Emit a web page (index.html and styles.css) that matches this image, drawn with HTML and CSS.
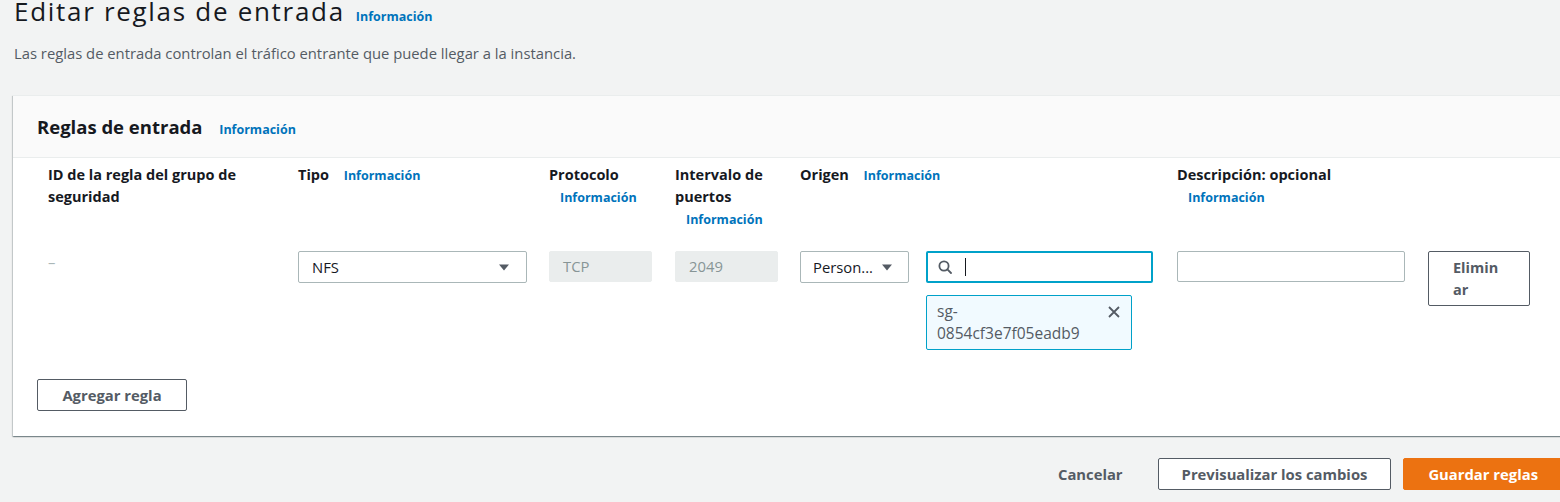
FILE: index.html
```html
<!DOCTYPE html>
<html lang="es">
<head>
<meta charset="utf-8">
<title>Editar reglas de entrada</title>
<link rel="stylesheet" href="styles.css">
</head>
<body>
<div class="page">
  <header class="page-head">
    <h1 class="title"><span class="title-text">Editar reglas de entrada</span><a class="info info-title" href="#">Información</a></h1>
    <p class="lead">Las reglas de entrada controlan el tráfico entrante que puede llegar a la instancia.</p>
  </header>

  <section class="panel">
    <div class="panel-head">
      <h2 class="panel-title">Reglas de entrada <a class="info" href="#">Información</a></h2>
    </div>
    <div class="panel-body">
      <div class="rules">
        <div class="th">ID de la regla del grupo de seguridad</div>
        <div class="th">Tipo <a class="info" href="#">Información</a></div>
        <div class="th">Protocolo <a class="info" href="#">Información</a></div>
        <div class="th">Intervalo de puertos <a class="info" href="#">Información</a></div>
        <div class="th">Origen <a class="info" href="#">Información</a></div>
        <div class="th">Descripción: opcional <a class="info" href="#">Información</a></div>
        <div class="th"></div>

        <div class="td td-id">–</div>
        <div class="td">
          <div class="select select-type"><span>NFS</span>
            <svg class="caret" viewBox="0 0 10 7" width="10" height="7"><path d="M0 0.5H10L5 6.5Z"/></svg>
          </div>
        </div>
        <div class="td"><div class="field field-disabled">TCP</div></div>
        <div class="td"><div class="field field-disabled">2049</div></div>
        <div class="td">
          <div class="origin">
            <div class="select select-origin"><span>Person...</span>
              <svg class="caret" viewBox="0 0 10 7" width="10" height="7"><path d="M0 0.5H10L5 6.5Z"/></svg>
            </div>
            <div class="origin-search">
              <div class="search">
                <svg class="search-icon" viewBox="0 0 14 14" width="14" height="14"><circle cx="6" cy="6" r="4.6"/><path d="M9.4 9.4L13 13"/></svg>
                <span class="cursor"></span>
              </div>
              <div class="token">
                <span class="token-text">sg-<wbr>0854cf3e7f05eadb9</span>
                <svg class="token-x" viewBox="0 0 12 12" width="12" height="12"><path d="M1 1L11 11M11 1L1 11"/></svg>
              </div>
            </div>
          </div>
        </div>
        <div class="td"><div class="field field-text"></div></div>
        <div class="td"><button class="btn btn-remove" type="button">Eliminar</button></div>
      </div>
      <button class="btn btn-add" type="button">Agregar regla</button>
    </div>
  </section>

  <footer class="actions">
    <button class="btn btn-link" type="button">Cancelar</button>
    <button class="btn" type="button">Previsualizar los cambios</button>
    <button class="btn btn-primary" type="button">Guardar reglas</button>
  </footer>
</div>
</body>
</html>
```
FILE: styles.css
```css
* { box-sizing: border-box; }

body {
  margin: 0;
  background: #f2f3f3;
  font-family: "Open Sans", "Noto Sans", sans-serif;
  font-size: 14.8px;
  line-height: 22px;
  color: #16191f;
  overflow: hidden;
}

.page {
  width: 1562px;
  padding-left: 13px;
}

.page-head { padding-left: 1px; }

.title {
  display: flex;
  align-items: baseline;
  height: 22px;
  margin: 0;
  font-weight: 400;
  color: #16191f;
}

.title-text {
  font-size: 26px;
  line-height: 22px;
  letter-spacing: 1.7px;
}

.info {
  display: inline-block;
  margin-left: 11px;
  font-size: 12.5px;
  font-weight: 700;
  line-height: 16px;
  letter-spacing: 0;
  color: #0073bb;
  text-decoration: none;
}

.info-title { margin-left: 11px; }

.lead {
  margin: 20px 0 0;
  color: #545b64;
}

.panel {
  margin-top: 31px;
  background: #fff;
  border-top: 1px solid #eaeded;
  box-shadow: 0 1px 1px 0 rgba(0, 28, 36, 0.3), 1px 1px 1px 0 rgba(0, 28, 36, 0.15), -1px 1px 1px 0 rgba(0, 28, 36, 0.15);
}

.panel-head {
  background: #fafafa;
  padding: 20px 24px 19px;
  border-bottom: 1px solid #eaeded;
}

.panel-title {
  margin: 0;
  font-size: 18.5px;
  font-weight: 700;
  line-height: 22px;
  height: 22px;
}

.panel-title .info { margin-left: 12px; }

.panel-body {
  padding: 6px 24px 25px;
}

.rules {
  display: grid;
  grid-template-columns: 250px 251px 126px 125px 377px 251px 110px;
  row-gap: 21px;
  margin-left: 11px;
  align-items: start;
}

.th {
  padding-right: 22px;
  font-size: 14.5px;
  font-weight: 700;
  line-height: 22px;
  color: #16191f;
}

.td-id {
  color: #aab7b8;
  line-height: 22px;
}

.select {
  display: flex;
  align-items: center;
  justify-content: space-between;
  height: 32px;
  padding: 0 17px 0 13px;
  background: #fff;
  border: 1px solid #aab7b8;
  border-radius: 2px;
  color: #16191f;
}

.select-type { width: 229px; }
.select-origin { width: 109px; padding-left: 12px; padding-right: 16px; }

.caret { fill: #545b64; flex: none; }

.field {
  height: 31px;
  border-radius: 2px;
  padding-left: 13px;
  line-height: 29px;
}

.field-disabled {
  width: 103px;
  background: #eaeded;
  border: 1px solid #eaeded;
  color: #879596;
}

.field-text {
  width: 228px;
  background: #fff;
  border: 1px solid #aab7b8;
}

.origin {
  display: flex;
  gap: 17px;
  align-items: flex-start;
}

.origin-search {
  display: flex;
  flex-direction: column;
  gap: 12px;
}

.search {
  display: flex;
  align-items: center;
  width: 227px;
  height: 32px;
  padding-left: 10px;
  border: 2px solid #00a1c9;
  border-radius: 2px;
  background: #fff;
}

.search-icon {
  fill: none;
  stroke: #545b64;
  stroke-width: 1.8;
  stroke-linecap: round;
}

.cursor {
  width: 1px;
  height: 18px;
  margin-left: 13px;
  background: #16191f;
}

.token {
  display: flex;
  justify-content: space-between;
  align-items: flex-start;
  width: 206px;
  padding: 4px 11px 5px 10px;
  background: #f1faff;
  border: 1px solid #00a1c9;
  border-radius: 2px;
  font-size: 15.5px;
  color: #545b64;
}

.token-text { max-width: 150px; }

.token-x {
  margin-top: 6px;
  fill: none;
  stroke: #545b64;
  stroke-width: 1.8;
}

.btn {
  height: 32px;
  padding: 0 23px;
  background: #fff;
  border: 1px solid #545b64;
  border-radius: 2px;
  font-family: inherit;
  font-size: 14.8px;
  font-weight: 700;
  line-height: 22px;
  color: #545b64;
}

.btn-remove {
  width: 102px;
  height: auto;
  padding: 5px 28px 4px 24px;
  text-align: left;
  word-break: break-all;
  font-size: 14.5px;
}

.btn-add {
  margin-top: 29px;
  width: 150px;
  padding: 0;
}

.actions {
  display: flex;
  justify-content: flex-end;
  gap: 12px;
  margin-top: 22px;
}

.btn-link {
  border-color: transparent;
  background: transparent;
  padding: 0 22px 0 23px;
}

.btn-primary {
  background: #ec7211;
  border-color: #ec7211;
  color: #fff;
  padding: 0 23px 0 24px;
}
```
